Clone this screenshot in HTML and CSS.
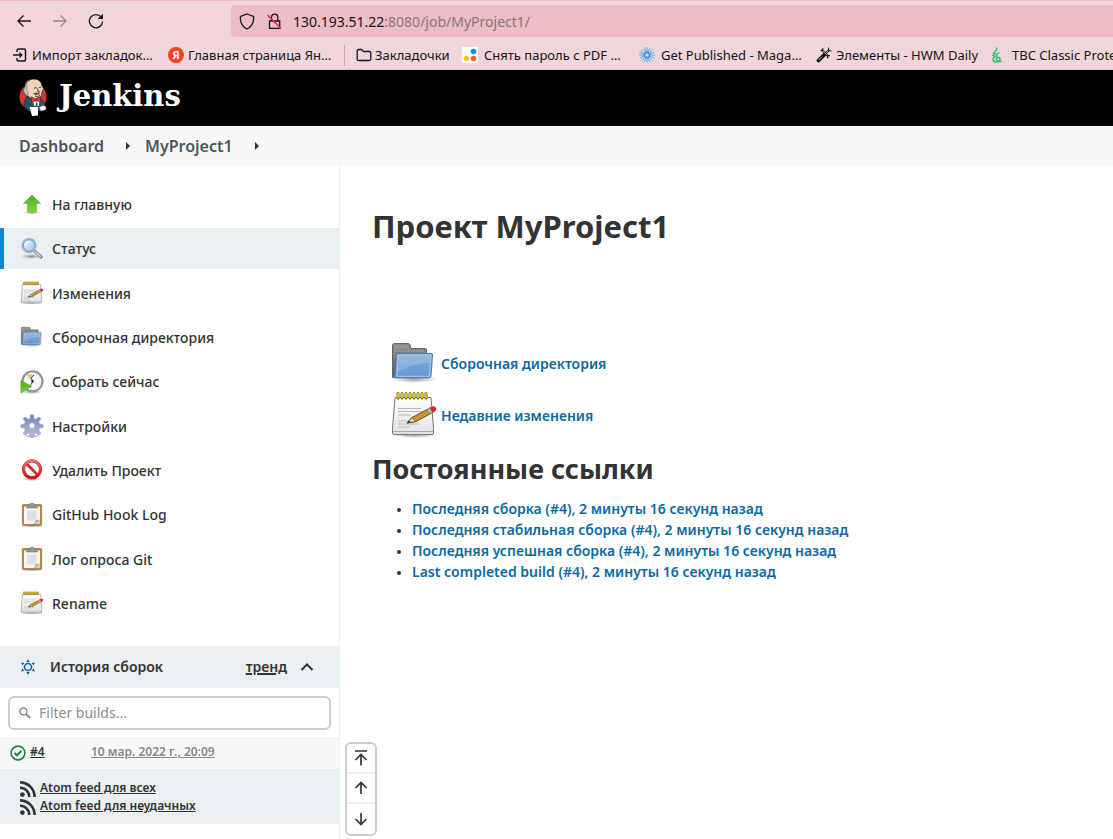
FILE: index.html
```
<!DOCTYPE html>
<html lang="ru">
<head>
<meta charset="utf-8">
<meta name="viewport" content="width=device-width, initial-scale=1">
<title>MyProject1 [Jenkins]</title>
<link rel="stylesheet" href="styles.css">
</head>
<body>
<svg class="sprite" aria-hidden="true">
  <defs>
    <linearGradient id="g-green" x1="0" y1="0" x2="0" y2="1"><stop offset="0" stop-color="#4ba51d"/><stop offset="1" stop-color="#7fdc2b"/></linearGradient>
    <linearGradient id="g-blue" x1="0" y1="0" x2="0" y2="1"><stop offset="0" stop-color="#85add9"/><stop offset="1" stop-color="#6397d0"/></linearGradient>
    <linearGradient id="g-grey" x1="0" y1="0" x2="0" y2="1"><stop offset="0" stop-color="#8c8c8c"/><stop offset="1" stop-color="#5c5c5c"/></linearGradient>
    <linearGradient id="g-gear" x1="0" y1="0" x2="0" y2="1"><stop offset="0" stop-color="#6c85bd"/><stop offset="1" stop-color="#c3bfdf"/></linearGradient>
    <linearGradient id="g-red" x1="0" y1="0" x2="0" y2="1"><stop offset="0" stop-color="#ee6a6a"/><stop offset="1" stop-color="#cf0a0a"/></linearGradient>
    <linearGradient id="g-lens" x1="0" y1="0" x2="1" y2="1"><stop offset="0" stop-color="#eaf4ff"/><stop offset="1" stop-color="#9fc5f3"/></linearGradient>
    <linearGradient id="g-paper" x1="0" y1="0" x2="0" y2="1"><stop offset="0" stop-color="#ffffff"/><stop offset="1" stop-color="#e3e3e3"/></linearGradient>
    <radialGradient id="g-shadow"><stop offset="0" stop-color="#000" stop-opacity=".4"/><stop offset="1" stop-color="#000" stop-opacity="0"/></radialGradient>
  </defs>
  <symbol id="i-up" viewBox="0 0 24 24">
    <ellipse cx="12" cy="19.500" rx="9" ry="2" fill="url(#g-shadow)"/>
    <path d="M12 2 20.500 10.500H16.500V18.500H7.500V10.500H3.500Z" fill="url(#g-green)" stroke="#7cb35c" stroke-width=".8"/>
  </symbol>
  <symbol id="i-search" viewBox="0 0 24 24">
    <ellipse cx="11" cy="19.500" rx="10" ry="2.500" fill="url(#g-shadow)"/>
    <path d="M14.500 14 21 20" stroke="#909090" stroke-width="3.400" stroke-linecap="round"/>
    <path d="M15.500 15 20.800 19.900" stroke="#ddd" stroke-width="1.400" stroke-linecap="round" stroke-dasharray="1.500 1"/>
    <circle cx="9" cy="8.500" r="6.800" fill="url(#g-lens)" stroke="#b3b7bc" stroke-width="1.800"/>
    <circle cx="9" cy="8.500" r="5.700" fill="none" stroke="#6f9cdb"/>
    <path d="M5.500 8a3.800 3.800 0 0 1 4-3.500" fill="none" stroke="#fff" stroke-width="1.300"/>
  </symbol>
  <symbol id="i-note" viewBox="0 0 48 48">
    <ellipse cx="24" cy="44" rx="22" ry="3" fill="url(#g-shadow)"/>
    <path d="M5 6.500H41L43.500 37V42Q43.500 43.500 42 43.500H4Q2.500 43.500 2.500 42V37Z" fill="url(#g-paper)" stroke="#777"/>
    <path d="M3.500 40.500H43" stroke="#aaa"/>
    <path d="M8 17.500H31M8 24H21M8 30H25M8 36H20M8 20.500H34M8 33H29" stroke="#b9b9b9"/>
    <path d="M8 2.500V7M12 2.500V7M16 2.500V7M20 2.500V7M24 2.500V7M28 2.500V7M32 2.500V7M36 2.500V7" stroke="#776712" stroke-width="3" stroke-linecap="round"/>
    <path d="M8 2.500V6.500M12 2.500V6.500M16 2.500V6.500M20 2.500V6.500M24 2.500V6.500M28 2.500V6.500M32 2.500V6.500M36 2.500V6.500" stroke="#e6d120" stroke-width="1.700" stroke-linecap="round"/>
    <path d="M17 32 22 26.500 39 17.500 42.500 21.500 26 30.500Z" fill="#c9933a" stroke="#7a5420" stroke-linejoin="round"/>
    <path d="M17 32 22 26.500 26 30.500Z" fill="#ead0a5" stroke="#7a5420" stroke-linejoin="round"/>
    <path d="M17 32 19 29.800 20.500 31.300Z" fill="#222"/>
    <path d="M37 18.700 40 16.500Q44 14.500 46 17Q46.500 19.500 43.500 21L40.500 22.700Z" fill="#b9bcc0" stroke="#777" stroke-width=".7"/>
    <path d="M39.500 17 41.500 15.900Q44.500 15 46 17Q46.500 19.500 44.500 20.500L42.500 21.500Z" fill="#e42424"/>
  </symbol>
  <symbol id="i-folder" viewBox="0 0 48 48">
    <ellipse cx="24" cy="40" rx="23" ry="4" fill="url(#g-shadow)"/>
    <path d="M2.500 38.500V6.500Q2.500 4.500 4.500 4.500H18Q19.500 4.500 20 6L21 9.500H35.500Q36.500 9.500 36.500 11V38.500Z" fill="url(#g-grey)" stroke="#666"/>
    <path d="M4 7H18M4 9H19M4 12H34M4 15H34M4 18H34" stroke="#a8a8a8" stroke-width=".8"/>
    <path d="M8 14.500H41Q42.700 14.500 42.500 16L41 37Q40.900 38.800 39 38.800H4.500Q3.500 38.800 4 37.500Q5 36.500 5.200 32.500L6.500 16Q6.600 14.500 8 14.500Z" fill="url(#g-blue)" stroke="#4a7ab3"/>
    <path d="M8 16H41L39.500 37.300H7Z" fill="none" stroke="#b4cfec" stroke-width=".9"/>
    <path d="M8.500 17H40L39.300 24Q22 24 7.500 33Z" fill="#fff" opacity=".17"/>
  </symbol>
  <symbol id="i-clock" viewBox="0 0 24 24">
    <ellipse cx="12" cy="22" rx="10" ry="2" fill="url(#g-shadow)"/>
    <circle cx="12.500" cy="11.300" r="10" fill="#f4f4f1" stroke="#817b95" stroke-width="2"/>
    <circle cx="12.500" cy="11.300" r="10" fill="none" stroke="#b4b0c3" stroke-width=".7"/>
    <path d="M12 11.500 6.500 5Q9 3.500 12.500 4Z" fill="#e3cd79"/>
    <path d="M14 5 11 8 13 11.500 9.500 16.500" fill="none" stroke="#444" stroke-width="1"/>
    <circle cx="12.500" cy="11.300" r="1.200" fill="#222"/>
    <path d="M1 10.500 11.500 16.500 1 23Z" fill="url(#g-green)" stroke="#5a9c35" stroke-width=".7"/>
  </symbol>
  <symbol id="i-gear" viewBox="0 0 24 24">
    <ellipse cx="12" cy="22" rx="9" ry="2" fill="url(#g-shadow)"/>
    <path fill-rule="evenodd" d="M10.800 0.800h2.400l.8 3.800 1.800.8L19 3 20.800 4.800 18.500 8l.8 2 3.800.9v2.400l-3.800.8-.8 2 2.200 3.200-1.800 1.800-3.200-2.200-1.900.8-.7 3.700h-2.200l-.7-3.700-1.900-.8-3.200 2.200-1.800-1.800 2.200-3.200-.8-2L.9 13.300v-2.400L4.700 10l.8-2L3.200 4.800 5 3l3.200 2.400 1.800-.8ZM12 8.700a3 3 0 1 0 0 6 3 3 0 0 0 0-6Z" fill="url(#g-gear)" stroke="#8b92b8" stroke-width=".7"/>
  </symbol>
  <symbol id="i-stop" viewBox="0 0 24 24">
    <ellipse cx="12" cy="21" rx="10" ry="2" fill="url(#g-shadow)"/>
    <circle cx="12" cy="11.300" r="8.500" fill="#fff" stroke="#c24040" stroke-width="3.200"/>
    <path d="M6.300 5.500 17.700 17" stroke="#d62a2a" stroke-width="2.800"/>
    <circle cx="12" cy="11.300" r="8.500" fill="none" stroke="url(#g-red)" stroke-width="2.400"/>
  </symbol>
  <symbol id="i-clip" viewBox="0 0 24 24">
    <ellipse cx="12" cy="23" rx="11" ry="1.500" fill="url(#g-shadow)"/>
    <rect x="2.300" y="1.500" width="19.400" height="21" rx="1" fill="#b98437" stroke="#94692c" stroke-width=".6"/>
    <path d="M4 3.500H20V21H4Z" fill="#f6f6f6"/>
    <path d="M7 7.500H16.500V17.500H7Z" fill="#e0e0e0"/>
    <path d="M20 16.500 15 21H13.500Q15.800 19.500 15.500 17.500Z" fill="#a5a5a5"/>
    <path d="M20 17V21H15.500Z" fill="#cfcfcf"/>
    <path d="M7.500 1.800H10V.5H14V1.800H16.500L17.500 5H6.500Z" fill="#92958f" stroke="#777a74" stroke-width=".6"/>
  </symbol>
  <symbol id="i-rss" viewBox="0 0 16 16">
    <circle cx="2.400" cy="13.600" r="2.300" fill="#333"/>
    <path d="M0 6.700A9.300 9.300 0 0 1 9.300 16M0 1.400A14.600 14.600 0 0 1 14.600 16" fill="none" stroke="#333" stroke-width="2.600"/>
  </symbol>
</svg>

<header class="browser">
  <div class="toolbar">
    <div class="nav">
      <button class="tool" aria-label="Назад"><svg width="16" height="16" viewBox="0 0 16 16"><path d="M15 8H2M7.500 2.500 2 8l5.500 5.500"/></svg></button>
      <button class="tool tool-off" aria-label="Вперёд" disabled><svg width="16" height="16" viewBox="0 0 16 16"><path d="M1 8H14M8.500 2.500 14 8l-5.500 5.500"/></svg></button>
      <button class="tool" aria-label="Обновить"><svg width="16" height="16" viewBox="0 0 16 16"><path d="M13.300 4.200A6.600 6.600 0 1 0 14.600 8.500"/><path d="M15 .8V6H9.600Z" fill="#15141a" stroke="none"/></svg></button>
    </div>
    <div class="address">
      <svg width="16" height="17" viewBox="0 0 16 17"><path d="M8 1 14.500 3.500Q15.500 12 8 16Q.5 12 1.500 3.500Z"/></svg>
      <svg width="16" height="17" viewBox="0 0 16 17"><path d="M3.500 8V15.300H13.700V8ZM5.500 8V4.500Q5.500 1.200 8.700 1.200T11.800 4.500V8"/><path d="M1.500 2 15 15.500" stroke="#e22850" stroke-width="1.500"/></svg>
      <span class="url">130.193.51.22<span class="url-path">:8080/job/MyProject1/</span></span>
    </div>
  </div>
  <nav class="bookmarks" aria-label="Закладки">
    <a href="#" class="bookmark"><svg width="16" height="16" viewBox="0 0 16 16"><path d="M5 5V3.500Q5 2 6.500 2H12Q13.500 2 13.500 3.500V12.500Q13.500 14 12 14H6.500Q5 14 5 12.500V11M1 8H9" stroke-width="1.500"/><path d="M7.500 4.800 10.800 8 7.500 11.200Z" fill="#15141a" stroke="none"/></svg>Импорт закладок…</a>
    <a href="#" class="bookmark"><span class="ya">Я</span>Главная страница Ян…</a>
    <a href="#" class="bookmark bookmark-split"><svg width="16" height="16" viewBox="0 0 16 16"><path d="M1.200 12.500V4Q1.200 2.500 2.700 2.500H5.500L7.500 4.500H13.300Q14.800 4.500 14.800 6V12Q14.800 13.500 13.300 13.500H2.700Q1.200 13.500 1.200 12.500Z"/></svg>Закладочки</a>
    <a href="#" class="bookmark bookmark-wide"><svg width="16" height="16" viewBox="0 0 16 16" class="solid"><rect width="16" height="16" fill="#fff"/><circle cx="11.500" cy="4.500" r="2.800" fill="#0a8cff"/><circle cx="4.500" cy="11.500" r="2.800" fill="#ffc629"/><circle cx="11.500" cy="11.500" r="2.800" fill="#ff5c33"/></svg>Снять пароль с PDF …</a>
    <a href="#" class="bookmark bookmark-wide"><svg width="16" height="16" viewBox="0 0 16 16" class="solid"><g fill="none" stroke="#3f9cf2"><circle cx="8" cy="8" r="2.500" stroke-width="1.800"/><path d="M8 0V5M8 11V16M0 8H5M11 8H16M2.300 2.300 6 6M10 10 13.700 13.700M13.700 2.300 10 6M6 10 2.300 13.700M5 .7 6.800 5M9.200 11 11 15.300M11 .7 9.200 5M6.800 11 5 15.300M.7 5 5 6.800M11 9.200 15.300 11M.7 11 5 9.200M11 6.800 15.300 5" stroke-width=".9"/></g></svg>Get Published - Maga…</a>
    <a href="#" class="bookmark"><svg width="16" height="16" viewBox="0 0 16 16" class="solid"><path d="M2.500 13.500 8 8" stroke="#111" stroke-width="3.800" stroke-linecap="round"/><path d="M8 8 13.500 2.500M5.500 2.500 13 10" stroke="#111" stroke-width="1.900"/><path d="M2.500 13.200 6 9.700M9 7 14 2M6 3 13 10" stroke="#bbb" stroke-width=".9"/><path d="M12.500 .5V3.500L15.500 4M4.500 3.500 6.500 4 7 1M11.500 11.500V8.500H14" fill="none" stroke="#111" stroke-width=".9"/></svg>Элементы - HWM Daily</a>
    <a href="#" class="bookmark bookmark-wide"><svg width="16" height="16" viewBox="0 0 16 16" class="solid"><path d="M6.500 .5Q7.500 3 5 4.500Q2 6.500 5 7Q8 7 9.500 5.500M4.500 8.500Q2.500 8 2 8.500M7.500 8.500Q3 9.500 3 12.500Q3.500 15 7 14.800Q10.500 14 10 11.500Q8.500 9.500 6.500 11Q6 13 8.500 14.500Q11 15 12 13.800" fill="none" stroke="#29c46a" stroke-width="1.400"/></svg>TBC Classic Protection</a>
  </nav>
</header>

<div class="brand">
  <a href="#" class="brand-link">
    <svg width="28" height="40" viewBox="0 0 28 40" aria-hidden="true">
      <circle cx="14" cy="19" r="13.500" fill="#d33833"/>
      <path d="M6 8Q8 1 15 1Q22 1 23 8Q26 10 23 14Q23 20 17 22Q13 23 9 18Q5 16 5 12Z" fill="#f0d6b7" stroke="#2b2625" stroke-width=".8"/>
      <path d="M6 9Q3 12 6 16L9 19V14Q7 12 8 9Q7 4 11 2Q6 3 6 9Z" fill="#c9c5c0" stroke="#49423e" stroke-width=".5"/>
      <path d="M15 10.500q2-2 3.500 0M20 9.500q1.500-1 2 .5M16 18q3 2 5-1M19 11v3h2" fill="none" stroke="#3a2e29" stroke-width=".9"/>
      <path d="M14 15.500q4-2 7 0l-2 1.500h-3Z" fill="#6c5a50"/>
      <path d="M8 18 14 22 21 19 25 24 26 30 23 33H10Q4 30 5 25Z" fill="#335061" stroke="#111d24" stroke-width=".5"/>
      <path d="M13 21 17 24 20.500 21 20 28 15.500 28Z" fill="#fff"/>
      <path d="M17.200 24 18.500 25V31H16Z" fill="#335061"/>
      <path d="M12 18.500 16.500 21 21.500 18.500V24L17 22.500 12.500 24.500Z" fill="#d33833" stroke="#671d1b" stroke-width=".5"/>
      <path d="M10.500 29H19V37.500L13 38Z" fill="#fff"/>
      <path d="M20.500 29.500q3-3 6-1l.5 3-5 1.500Z" fill="#fff" stroke="#aaa" stroke-width=".5"/>
    </svg>
    <span class="brand-name">Jenkins</span>
  </a>
</div>

<nav class="crumbs" aria-label="Путь">
  <a href="#">Dashboard</a><span class="crumb-arrow"></span>
  <a href="#">MyProject1</a><span class="crumb-arrow"></span>
</nav>

<div class="page">
  <aside class="side">
    <nav class="tasks" aria-label="Задачи">
      <a href="#" class="task"><svg><use href="#i-up"/></svg>На главную</a>
      <a href="#" class="task task-active" aria-current="page"><svg><use href="#i-search"/></svg>Статус</a>
      <a href="#" class="task"><svg><use href="#i-note"/></svg>Изменения</a>
      <a href="#" class="task"><svg><use href="#i-folder"/></svg>Сборочная директория</a>
      <a href="#" class="task"><svg><use href="#i-clock"/></svg>Собрать сейчас</a>
      <a href="#" class="task"><svg><use href="#i-gear"/></svg>Настройки</a>
      <a href="#" class="task"><svg><use href="#i-stop"/></svg>Удалить Проект</a>
      <a href="#" class="task"><svg><use href="#i-clip"/></svg>GitHub Hook Log</a>
      <a href="#" class="task"><svg><use href="#i-clip"/></svg>Лог опроса Git</a>
      <a href="#" class="task"><svg><use href="#i-note"/></svg>Rename</a>
    </nav>

    <section class="history">
      <div class="history-head">
        <svg width="16" height="16" viewBox="0 0 16 16" aria-hidden="true"><circle cx="8" cy="8" r="3.500" fill="none" stroke="#0b6aa2" stroke-width="1.600"/><path d="M8 0 9.700 3H6.300ZM8 16 9.700 13H6.300ZM1 3.500 4.300 4 2.600 6.500ZM15 3.500 11.700 4 13.400 6.500ZM1 12.500 4.300 12 2.600 9.500ZM15 12.500 11.700 12 13.400 9.500Z" fill="#0b6aa2"/></svg>
        <h2>История сборок</h2>
        <a href="#">тренд</a>
        <button class="fold" aria-label="Свернуть"><svg width="14" height="10" viewBox="0 0 14 10"><path d="M1.500 8 7 2.500 12.500 8" fill="none" stroke="#333" stroke-width="2"/></svg></button>
      </div>
      <label class="filter">
        <svg width="12" height="12" viewBox="0 0 13 13" aria-hidden="true"><circle cx="4.800" cy="4.800" r="3.800" fill="none" stroke="#777" stroke-width="1.400"/><path d="M7.700 7.700 12 12" stroke="#777" stroke-width="1.600"/></svg>
        <input type="text" placeholder="Filter builds..." aria-label="Filter builds">
      </label>
      <div class="build">
        <svg width="16" height="16" viewBox="0 0 16 16" aria-hidden="true"><circle cx="8" cy="8" r="6.900" fill="#fff" stroke="#138347" stroke-width="1.600"/><path d="M4.500 8 7 10.300 11.500 5.800" fill="none" stroke="#138347" stroke-width="2"/></svg>
        <a href="#" class="build-id">#4</a>
        <a href="#" class="build-date">10 мар. 2022 г., 20:09</a>
      </div>
      <div class="feeds">
        <a href="#"><svg><use href="#i-rss"/></svg><span>Atom feed для всех</span></a>
        <a href="#"><svg><use href="#i-rss"/></svg><span>Atom feed для неудачных</span></a>
      </div>
    </section>

    <div class="pager">
      <button aria-label="В начало"><svg width="14" height="16" viewBox="0 0 14 16"><path d="M1 1H13M7 15.500V5M1.500 10 7 4.500 12.500 10"/></svg></button>
      <button aria-label="Новее"><svg width="14" height="14" viewBox="0 0 14 14"><path d="M7 13V2M1.500 7 7 1.500 12.500 7"/></svg></button>
      <button aria-label="Старее"><svg width="14" height="14" viewBox="0 0 14 14"><path d="M7 1V12M1.500 7 7 12.500 12.500 7"/></svg></button>
    </div>
  </aside>

  <main class="main">
    <h1>Проект MyProject1</h1>
    <div class="shortcuts">
      <a href="#"><svg><use href="#i-folder"/></svg>Сборочная директория</a>
      <a href="#"><svg><use href="#i-note"/></svg>Недавние изменения</a>
    </div>
    <h2>Постоянные ссылки</h2>
    <ul class="permalinks">
      <li><a href="#">Последняя сборка (#4), 2 минуты 16 секунд назад</a></li>
      <li><a href="#">Последняя стабильная сборка (#4), 2 минуты 16 секунд назад</a></li>
      <li><a href="#">Последняя успешная сборка (#4), 2 минуты 16 секунд назад</a></li>
      <li><a href="#">Last completed build (#4), 2 минуты 16 секунд назад</a></li>
    </ul>
  </main>
</div>
</body>
</html>
```
FILE: styles.css
```
* { box-sizing: border-box; }

body {
  margin: 0;
  min-height: 100vh;
  display: flex;
  flex-direction: column;
  overflow: hidden;
  background: #fff;
  color: #333;
  font: 14px/21px "Noto Sans", "Open Sans", sans-serif;
}

a { color: inherit; text-decoration: none; }
button { padding: 0; border: 0; background: none; font: inherit; }
h1, h2 { margin: 0; }
svg { flex: none; display: block; }
.sprite { position: absolute; width: 0; height: 0; }

/* Browser chrome */
.browser {
  background: #f0d5da;
  border-top: 1px solid #ecbdc5;
  border-bottom: 1px solid #e5bfc6;
  color: #15141a;
  font-size: 13px;
}
.browser svg { fill: none; stroke: #15141a; stroke-width: 1.3; }
.browser .solid { stroke: none; }
.toolbar { display: flex; padding-top: 4px; }
.nav { display: flex; gap: 20px; padding-left: 16px; width: 231px; align-items: center; }
.tool-off { opacity: .4; }
.address {
  flex: 1;
  display: flex;
  align-items: center;
  gap: 11px;
  height: 32px;
  padding-left: 8px;
  background: #ecbdc5;
  border-radius: 4px 0 0 4px;
}
.url { font-size: 14px; }
.url-path { color: #8d757b; }
.bookmarks {
  display: grid;
  grid-template-columns: 156px 176px 118px 177px 177px 174px 1fr;
  align-items: center;
  height: 32px;
  padding: 4px 0 0 12px;
}
.bookmark { display: flex; align-items: center; gap: 4px; white-space: nowrap; min-width: 0; }
.bookmark-wide { gap: 6px; }
.bookmark-split { padding-left: 11px; border-left: 1px solid #c4a9b0; gap: 3px; }
.ya {
  width: 16px;
  height: 16px;
  border-radius: 8px;
  background: #fc3f1d;
  color: #fff;
  font-size: 11px;
  font-weight: 700;
  line-height: 16px;
  text-align: center;
}

/* Jenkins header */
.brand { background: #000; padding: 8px 19px; }
.brand-link { display: inline-flex; gap: 12px; color: #fff; vertical-align: top; }
.brand-name { font: 700 29px/37px "DejaVu Serif", serif; }
.crumbs {
  display: flex;
  align-items: center;
  padding: 0 19px;
  height: 40px;
  background: #f8f8f8;
  color: #4d545d;
  font-size: 16px;
  font-weight: 600;
}
.crumb-arrow {
  margin: 0 15px 0 22px;
  border: 4px solid transparent;
  border-left-color: #333;
  border-right-width: 0;
}

/* Side panel */
.page { display: flex; flex: 1; }
.side { position: relative; width: 340px; flex: none; border-right: 1px solid #eaeff2; }
.tasks {
  display: flex;
  flex-direction: column;
  justify-content: space-between;
  min-height: 440px;
  margin: 18px 0 22px;
  font-weight: 500;
}
.task {
  display: flex;
  align-items: center;
  gap: 8px;
  min-height: 41px;
  padding-left: 16px;
  border-left: 4px solid transparent;
}
.task svg { width: 24px; height: 24px; }
.task-active { background: #eaeff2; border-left-color: #0b86d2; }

.history-head {
  display: flex;
  align-items: center;
  height: 42px;
  padding: 0 25px 0 20px;
  background: #eaeff2;
  font-weight: 600;
}
.history-head h2 { flex: 1; margin-left: 14px; font-size: 14px; font-weight: 600; padding-bottom: 2px; }
.history-head a { text-decoration: underline; text-decoration-thickness: 2px; padding-bottom: 2px; }
.fold { margin-left: 13px; }
.filter {
  display: flex;
  align-items: center;
  gap: 8px;
  height: 34px;
  margin: 8px;
  padding: 0 9px 1px;
  border: 2px solid #ccc;
  border-radius: 6px;
}
.filter input { flex: 1; min-width: 0; border: 0; outline: 0; padding: 0; background: none; color: #333; font: inherit; }
.filter input::placeholder { color: #8c8c8c; opacity: 1; }
.build {
  display: flex;
  align-items: center;
  height: 31px;
  padding: 0 10px 2px;
  background: #f8f8f8;
  border-top: 1px solid #eaeff2;
  font-size: 12px;
  font-weight: 600;
}
.build a { text-decoration: underline; line-height: 18px; padding-bottom: 2px; }
.build-id { width: 61px; margin-left: 4px; }
.build-date { color: #888; }
.feeds { padding: 10px 20px 9px; background: #eaeff2; font-size: 12px; font-weight: 600; line-height: 18px; }
.feeds a { display: flex; gap: 4px; }
.feeds svg { width: 16px; height: 16px; margin-top: 2px; }
.feeds span { text-decoration: underline; }

/* Floating pager over the content edge */
.pager {
  position: absolute;
  left: 345px;
  bottom: 3px;
  display: grid;
  grid-template-rows: 28px 30px 32px;
  width: 32px;
  border: 2px solid #ccc;
  border-radius: 6px;
  background: #fff;
}
.pager button { display: grid; place-items: center; }
.pager button + button { border-top: 2px solid #eee; }
.pager svg { fill: none; stroke: #333; stroke-width: 1.7; }

/* Project page */
.main { flex: 1; padding: 38px 32px; }
h1 { font-size: 31px; line-height: 44px; }
.shortcuts { display: grid; gap: 4px; padding: 91px 0 12px 18px; }
.shortcuts a { display: flex; align-items: center; gap: 3px; }
.shortcuts svg { width: 48px; height: 48px; }
.main h2 { font-size: 27px; line-height: 36px; }
.main a { color: #0b6aa2; font-weight: 600; }
.permalinks { margin: 11px 0 0; padding-left: 40px; }
.permalinks li::marker { font-size: 11px; }
```
